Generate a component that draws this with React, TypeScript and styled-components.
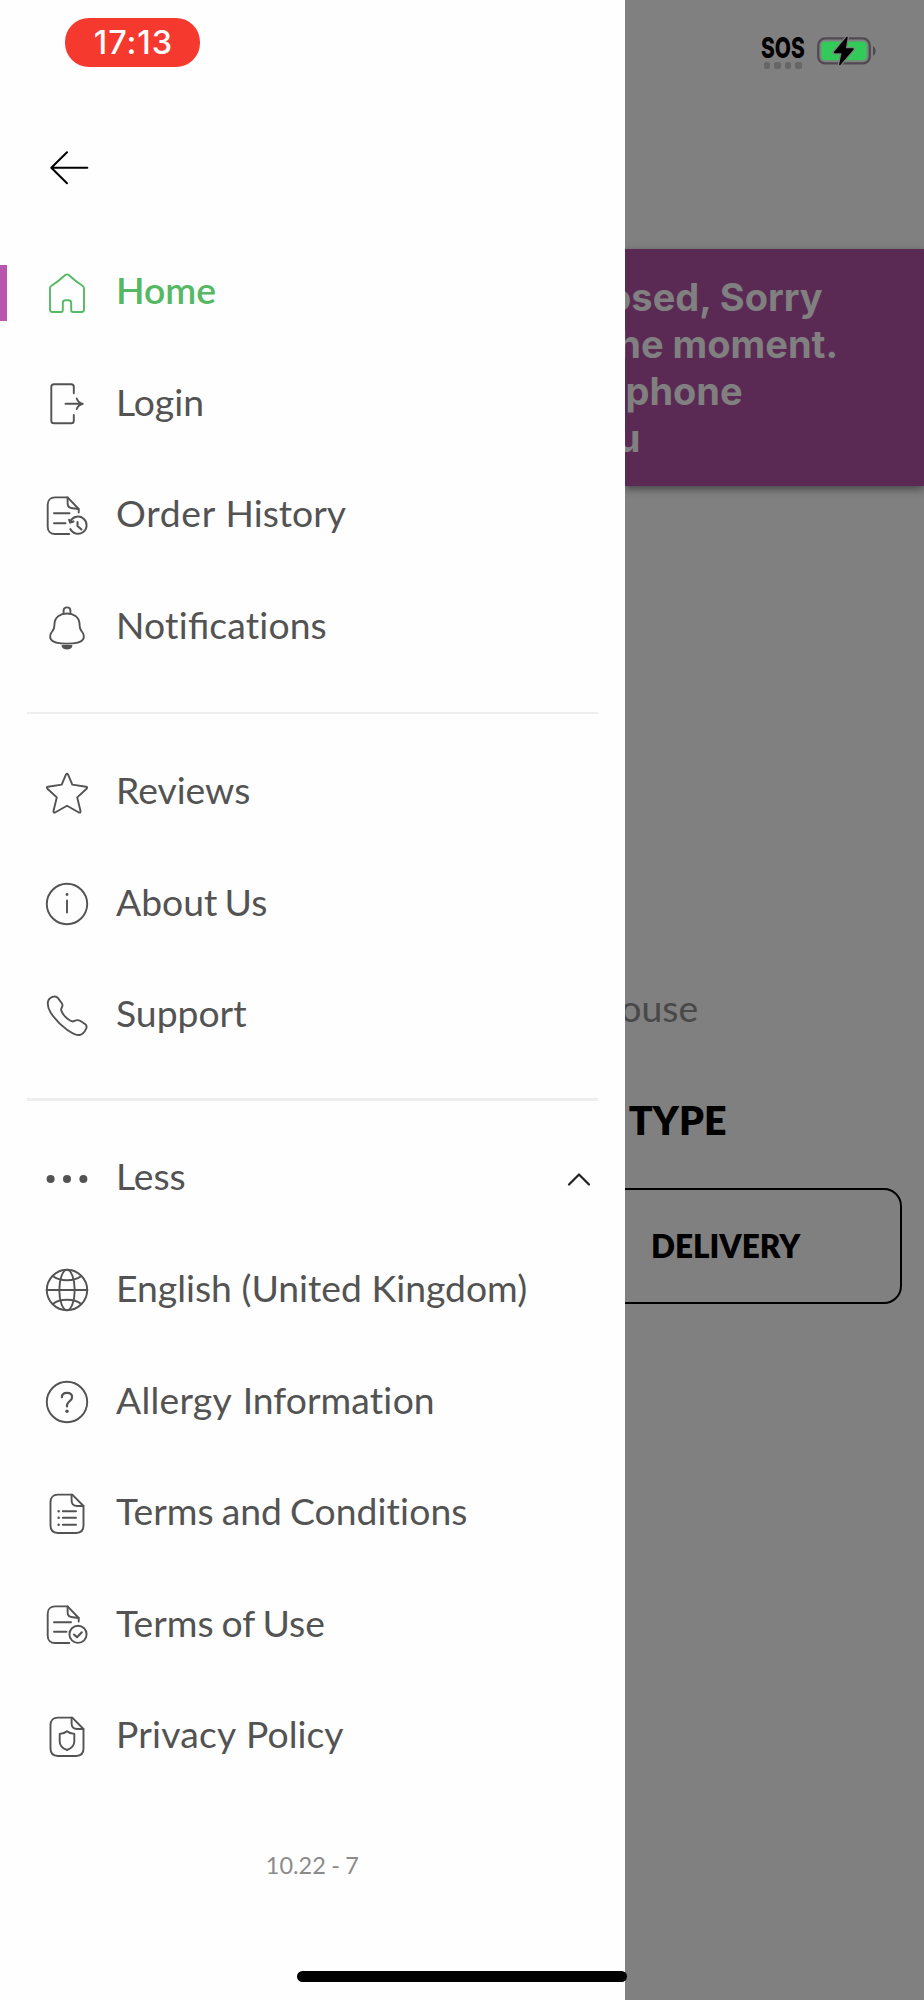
import React from "react";
import styled, { createGlobalStyle } from "styled-components";

const GlobalStyle = createGlobalStyle`
  *, *::before, *::after { box-sizing: border-box; }
  body { margin: 0; background: #808080; }
`;

const Screen = styled.div`
  position: relative;
  display: flex;
  width: 924px;
  height: 2000px;
  overflow: hidden;
  font-family: Lato, "Liberation Sans", sans-serif;
`;

const Drawer = styled.aside`
  display: flex;
  flex-direction: column;
  flex: none;
  width: 624.67px;
  background: #fefefe;
`;

const DrawerStatus = styled.div`
  height: 140px;
  padding: 18px 0 0 65.3px;
`;

const TimePill = styled.div`
  display: flex;
  align-items: center;
  justify-content: center;
  width: 135.2px;
  height: 49px;
  padding: 1px 0 0 1px;
  border-radius: 24px;
  background: #f5392f;
  color: #fff;
  font: 500 32.5px/1 Inter, sans-serif;
  letter-spacing: 0.9px;
`;

const BackButton = styled.button`
  display: block;
  height: 56px;
  margin-bottom: 40.8px;
  padding: 0 0 0 45px;
  border: 0;
  background: none;
  text-align: left;
  color: #000;
`;

const Group = styled.nav`
  display: flex;
  flex-direction: column;
`;

const Row = styled.a<{ $active?: boolean }>`
  display: flex;
  align-items: center;
  height: 111.67px;
  padding: 0 34px 0 0;
  color: ${(p) => (p.$active ? "#55b963" : "#535353")};
`;

const ActiveBar = styled.span<{ $on?: boolean }>`
  width: 6.7px;
  height: 56px;
  margin-right: 38.3px;
  background: ${(p) => (p.$on ? "#b955ad" : "transparent")};
`;

const Label = styled.span<{ $active?: boolean; $gap?: number; $tracking?: number }>`
  flex: 1;
  margin: -6px 0 0 27px;
  font-size: 37.3px;
  line-height: 45px;
  font-weight: ${(p) => (p.$active ? 600 : 400)};
  word-spacing: ${(p) => p.$gap ?? 0}px;
  white-space: nowrap;
`;

const FirstWord = styled.span<{ $tracking: number }>`
  letter-spacing: ${(p) => p.$tracking}px;
`;

const Unjoined = styled.span`
  font-variant-ligatures: none;
  letter-spacing: 0.3px;
`;

const Divider = styled.hr<{ $before: number; $after: number; $size: number }>`
  width: 571px;
  height: ${(p) => p.$size}px;
  margin: ${(p) => p.$before}px 0 ${(p) => p.$after}px 27px;
  border: 0;
  background: #eee;
`;

const Version = styled.div`
  margin-top: 57px;
  text-align: center;
  font-size: 23.5px;
  line-height: 30px;
  word-spacing: -0.7px;
  color: #8b8b8b;
`;

const Page = styled.main`
  display: flex;
  flex-direction: column;
  flex: 1;
  min-width: 0;
  overflow: hidden;
  background: #808080;
`;

const PageStatus = styled.div`
  display: flex;
  align-items: flex-start;
  height: 249px;
  padding: 35px 0 0 136.3px;
`;

const Signal = styled.div`
  width: 44px;
  margin-right: 10.7px;
`;

const Sos = styled.div`
  font: 800 29px/25px Inter, sans-serif;
  transform: scaleX(0.72);
  transform-origin: left;
  width: 66px;
  color: #000;
`;

const SignalDots = styled.div`
  display: flex;
  gap: 4px;
  margin: 2px 0 0 3px;
`;

const SignalDot = styled.i`
  width: 6.5px;
  height: 6.5px;
  border-radius: 2px;
  background: #666;
`;

const Banner = styled.section`
  height: 237px;
  padding-top: 25px;
  background: #5b2a54;
  box-shadow: 0 3px 8px rgba(0, 0, 0, 0.45);
  color: #808080;
  font: 700 38px/47px Inter, sans-serif;
`;

const BannerLine = styled.div<{ $end: number }>`
  display: flex;
  justify-content: flex-end;
  width: ${(p) => p.$end}px;
  white-space: pre;
`;

const PlaceName = styled.div`
  display: flex;
  justify-content: flex-end;
  width: 73.5px;
  margin-top: 499px;
  font-size: 37.3px;
  line-height: 45px;
  color: #484848;
`;

const OrderHeading = styled.h2`
  margin: 65.8px 0 0 4px;
  font-size: 39.3px;
  line-height: 48px;
  font-weight: 800;
  color: #000;
`;

const DeliveryOption = styled.button`
  display: flex;
  align-items: center;
  width: 297px;
  height: 116px;
  margin: 43.9px 0 0 -20px;
  padding: 0 0 0 44.3px;
  border: 2px solid #000;
  border-radius: 18px;
  background: none;
  color: #000;
  font: 800 31.5px/38px Lato, sans-serif;
`;

const HomeIndicator = styled.div`
  position: absolute;
  left: 297px;
  top: 1971px;
  width: 330px;
  height: 11px;
  border-radius: 6px;
  background: #000;
`;

const IconSvg = styled.svg`
  flex: none;
  display: block;
  fill: none;
  stroke: currentColor;
  stroke-width: 1.9;
  stroke-linecap: round;
  stroke-linejoin: round;
`;

const CutPage = () => (
  <>
    <path d="M24.3 40H10C5.600 40 2.700 37.200 2.700 32.700V10.700C2.700 6.200 5.600 3.400 10 3.400H22.600L33.700 15V18.500" />
    <path d="M22.600 3.400V9C22.600 12.800 24.500 14.300 28 14.300L33.500 15" />
  </>
);

const FullPage = () => (
  <>
    <path d="M27.300 2.600H12.800C8.300 2.600 5.500 5.500 5.500 10V33.600C5.500 38.200 8.300 41 12.800 41H31.200C35.700 41 38.500 38.200 38.500 33.600V14Z" />
    <path d="M26.600 2.800V8.500C26.600 12.200 28.600 14 32.200 14H38.400" />
  </>
);

const icons: Record<string, React.ReactNode> = {
  home: (
    <path d="M5 17.500C5 16.200 5.500 15.500 6.500 14.800C11 12 16 8 20 4.300C21.300 3.100 22.700 3.100 24 4.300C28 8 33 12 37.500 14.800C38.500 15.500 39 16.200 39 17.500V38.500C39 40 38 41 36.500 41H28C26.700 41 26.200 40.300 26.200 39V32C26.200 30.200 25.300 29.300 23.600 29.300H20.400C18.700 29.300 17.800 30.200 17.800 32V39C17.800 40.300 17.300 41 16 41H7.500C6 41 5 40 5 38.500Z" />
  ),
  login: (
    <>
      <path d="M28.800 11.200V4.800Q28.800 2.200 26.200 2.200H9Q6.300 2.200 6.300 4.800V38.700Q6.300 41.300 9 41.300H26.200Q28.800 41.300 28.800 38.700V33" />
      <path d="M20.500 21.800H37.500M31.700 16.500Q33 20.500 37.800 21.800Q33 23 31.700 27" />
    </>
  ),
  history: (
    <>
      <CutPage />
      <path d="M9 19.300H24.500M9 29.300H20.500" />
      <path d="M25.500 27A8.600 8.600 0 1 1 25.300 35" />
      <path d="M24.200 25.800L25.200 28.600L28.500 27.400M32.500 28V32L36.500 35.500" strokeWidth="2.100" />
    </>
  ),
  bell: (
    <>
      <path d="M18.600 7.700V4.500C18.600 2.500 20 1.400 22 1.400S25.400 2.500 25.400 4.500V7.700" />
      <path d="M22 7.500C15.500 7.500 10 11 9.500 17.500C9.200 20.500 9.800 22.500 7.500 25C5 28 4.500 31 6 33.500C7.500 36 12 37.600 22 37.600S36.500 36 38 33.500C39.500 31 39 28 36.500 25C34.200 22.500 34.800 20.500 34.500 17.500C34 11 28.500 7.500 22 7.500Z" />
      <path d="M17.500 39.900H26.500Q25.500 42.500 22 42.500T17.500 39.900Z" fill="currentColor" />
    </>
  ),
  star: (
    <path d="M21 3.400Q22 1.800 23 3.400L27.300 13.600L41 15.700Q43 16.300 41.600 17.700L32.200 26.400L35.500 40Q35.700 42.200 33.900 41.500L22 34.700L10.100 41.500Q8.300 42.200 8.500 40L11.800 26.400L2.400 17.700Q1 16.300 3 15.700L16.700 13.600Z" />
  ),
  info: (
    <>
      <circle cx="22" cy="22" r="20.200" />
      <circle cx="22" cy="12.500" r="1.400" fill="currentColor" stroke="none" />
      <path d="M22 18.500V30.500" />
    </>
  ),
  phone: (
    <path d="M2.900 8C3.300 5.800 5.500 3.700 7.500 2.900C9.800 2 11.700 2.500 13 4.200L16.800 9.200C18 10.800 17.700 12 16.700 13.700C15.700 15.300 16 16.300 16.800 17.800C18.500 21.500 21.500 24.500 25.500 26.800C27 27.700 28 27.700 29.500 26.900C31.500 25.900 33.500 25.900 35.500 27L40 30C41.800 31.300 42 32.700 41.200 34.700C40 37.300 37.500 40.500 34.800 41C31 41.600 26.500 38.800 22 35.700C16.500 31.800 9.500 24.500 5.600 18.500C3.500 15 2.400 11.500 2.900 8Z" />
  ),
  dots: (
    <g fill="currentColor" stroke="none">
      <circle cx="5.600" cy="22" r="4" />
      <circle cx="22" cy="22" r="4" />
      <circle cx="38.400" cy="22" r="4" />
    </g>
  ),
  globe: (
    <>
      <circle cx="22" cy="22" r="20.200" />
      <ellipse cx="22" cy="22" rx="7.700" ry="20.200" />
      <path d="M1.600 22H42.400M7.800 8Q13 12.200 22 12.200T36.200 8M7.800 36Q13 31.800 22 31.800T36.200 36" />
    </>
  ),
  question: (
    <>
      <circle cx="22" cy="22" r="20.200" />
      <path d="M16.900 17.200C16.900 14.400 19 12.800 22 12.800S27.100 14.500 27.100 17.200C27.100 21 22 21.500 22 25.300V26.500" strokeWidth="2.200" />
      <circle cx="22" cy="31.200" r="1.700" fill="currentColor" stroke="none" />
    </>
  ),
  list: (
    <>
      <FullPage />
      <path d="M17.800 19.300H31M17.800 25.700H31M17.800 32.700H31" />
      <path d="M13.600 19.300H13.700M13.600 25.700H13.700M13.600 32.700H13.700" strokeWidth="2.400" />
    </>
  ),
  check: (
    <>
      <CutPage />
      <path d="M9 19.300H26M9 28.700H21.500" />
      <circle cx="33" cy="31.300" r="8.600" />
      <path d="M29 31.500L32 34.300L36.800 29.300" strokeWidth="2.100" />
    </>
  ),
  shield: (
    <>
      <FullPage />
      <path d="M22 16.200C20 18 17.500 18.600 14.700 18.900V26.500C14.700 30.500 17.500 33.300 22 35C26.500 33.300 29.300 30.500 29.300 26.500V18.900C26.500 18.600 24 18 22 16.200Z" />
    </>
  ),
};

const Icon = ({ name }: { name: string }) => (
  <IconSvg width="44" height="44" viewBox="0 0 44 44">
    {icons[name]}
  </IconSvg>
);

const ChevronSvg = styled(IconSvg)`
  color: #222;
  stroke-width: 2.2;
`;

const Chevron = () => (
  <ChevronSvg width="24" height="24" viewBox="0 0 24 24">
    <path d="M2 17.500L12 7.500L22 17.500" />
  </ChevronSvg>
);

const Battery = () => (
  <IconSvg width="62" height="32" viewBox="0 0 62 32">
    <rect x="2.200" y="3.400" width="51.600" height="25" rx="7" stroke="#514951" strokeWidth="2.200" />
    <rect x="5.300" y="6.500" width="45.400" height="18.800" rx="4" fill="#32ca59" stroke="none" />
    <path d="M57 11V21Q59.700 19.500 59.700 16T57 11Z" fill="#514951" stroke="none" />
    <path
      d="M31 2.500L18.500 17.500H26.500L23.800 29.500L37 14H29Z"
      fill="#000"
      stroke="#808080"
      strokeWidth="4"
    />
    <path d="M31 2.500L18.500 17.500H26.500L23.800 29.500L37 14H29Z" fill="#000" stroke="#000" strokeWidth="1.400" />
  </IconSvg>
);

type Item = {
  icon: string;
  label: string;
  active?: boolean;
  open?: boolean;
  gap?: number;
  lead?: number;
};

const primary: Item[] = [
  { icon: "home", label: "Home", active: true },
  { icon: "login", label: "Login" },
  { icon: "history", label: "Order History", lead: 0.7 },
  { icon: "bell", label: "Notifications" },
];

const secondary: Item[] = [
  { icon: "star", label: "Reviews" },
  { icon: "info", label: "About Us", gap: -2.3 },
  { icon: "phone", label: "Support" },
];

const extra: Item[] = [
  { icon: "dots", label: "Less", open: true },
  { icon: "globe", label: "English (United Kingdom)" },
  { icon: "question", label: "Allergy Information", lead: 0.25, gap: 1.1 },
  { icon: "list", label: "Terms and Conditions", gap: -1.4 },
  { icon: "check", label: "Terms of Use", gap: -1.6 },
  { icon: "shield", label: "Privacy Policy", lead: 0.2, gap: 0.2 },
];

/* Keeps "t" and "i" as separate letters; other ligatures stay on. */
const splitPairs = (text: string) =>
  text
    .split(/(ti)/)
    .map((part, i) => (part === "ti" ? <Unjoined key={i}>{part}</Unjoined> : part));

const renderLabel = (text: string, lead?: number) => {
  if (!lead) return splitPairs(text);
  const end = text.indexOf(" ");
  return (
    <>
      <FirstWord $tracking={lead}>{text.slice(0, end)}</FirstWord>
      {splitPairs(text.slice(end))}
    </>
  );
};

const MenuGroup = ({ items }: { items: Item[] }) => (
  <Group>
    {items.map((item) => (
      <Row key={item.label} $active={item.active}>
        <ActiveBar $on={item.active} />
        <Icon name={item.icon} />
        <Label $active={item.active} $gap={item.gap}>
          {renderLabel(item.label, item.lead)}
        </Label>
        {item.open && <Chevron />}
      </Row>
    ))}
  </Group>
);

export default function App() {
  return (
    <>
      <GlobalStyle />
      <Screen>
        <Drawer>
          <DrawerStatus>
            <TimePill>17:13</TimePill>
          </DrawerStatus>
          <BackButton aria-label="Back">
            <IconSvg width="44" height="44" viewBox="0 0 44 44">
              <path d="M42.300 21.800H6.500M22 6.300L6.300 21.800L22 37.300" strokeWidth="2" />
            </IconSvg>
          </BackButton>
          <MenuGroup items={primary} />
          <Divider $before={28.5} $after={22.9} $size={2} />
          <MenuGroup items={secondary} />
          <Divider $before={26.1} $after={22} $size={3} />
          <MenuGroup items={extra} />
          <Version>10.22 - 7</Version>
        </Drawer>
        <Page>
          <PageStatus>
            <Signal>
              <Sos>SOS</Sos>
              <SignalDots>
                <SignalDot />
                <SignalDot />
                <SignalDot />
                <SignalDot />
              </SignalDots>
            </Signal>
            <Battery />
          </PageStatus>
          <Banner>
            <BannerLine $end={198}>osed, Sorry</BannerLine>
            <BannerLine $end={213.5}>he moment.</BannerLine>
            <BannerLine $end={118}>phone</BannerLine>
            <BannerLine $end={15.8}>u</BannerLine>
          </Banner>
          <PlaceName>ouse</PlaceName>
          <OrderHeading>TYPE</OrderHeading>
          <DeliveryOption>DELIVERY</DeliveryOption>
        </Page>
        <HomeIndicator />
      </Screen>
    </>
  );
}
